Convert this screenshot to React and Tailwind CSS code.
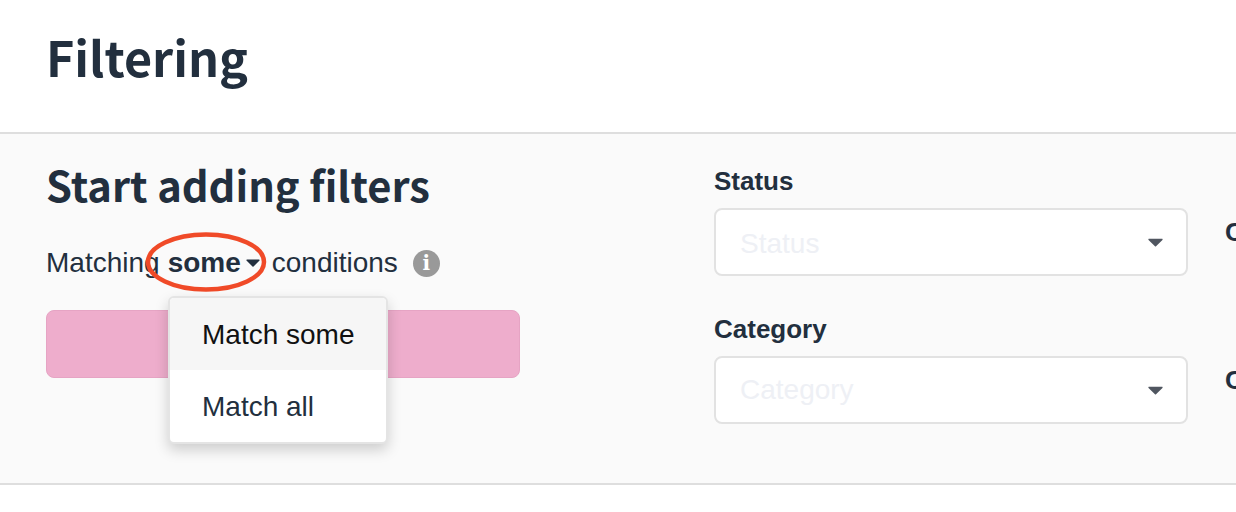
import React from 'react';

const heading = "font-['Noto_Sans_CJK_SC',sans-serif] font-bold text-[#222f3e]";

function Caret({ className }) {
  return (
    <svg viewBox="0 0 14 8" className={className} fill="currentColor">
      <path d="M1 0.5h12c.6 0 .9.7.5 1.1L7.5 7.4c-.3.3-.7.3-1 0L.5 1.6C.1 1.2.4.5 1 .5z" />
    </svg>
  );
}

function SelectField({ label, className, textClass }) {
  return (
    <div className={className}>
      <label className="block text-[26px] leading-[30px] font-bold text-[#222f3e]">{label}</label>
      <div className="mt-[12px] flex h-[68px] w-[474px] items-center justify-between rounded-[8px] border-2 border-[#e2e2e2] bg-white pl-[24px] pr-[23px]">
        <span className={`text-[28px] text-[#eef0f5] ${textClass}`}>{label}</span>
        <Caret className="h-[9px] w-[15px] text-[#505660]" />
      </div>
    </div>
  );
}

export default function App() {
  return (
    <div className="h-[512px] w-[1236px] overflow-hidden bg-white font-['Liberation_Sans',Arial,sans-serif]">
      <header className="h-[132px] pl-[46px] pt-[20px]">
        <h1 className={`${heading} text-[48.5px] leading-[72px]`}>Filtering</h1>
      </header>

      <section className="flex h-[353px] border-y-2 border-[#dedede] bg-[#fafafa]">
        <div className="relative ml-[46px] w-[474px] shrink-0 pt-[20px]">
          <h2 className={`${heading} whitespace-nowrap text-[41.7px] leading-[60px]`}>Start adding filters</h2>

          <div className="mt-[31px] flex h-[36px] items-center whitespace-nowrap text-[28px] text-[#222f3e]">
            <span>Matching</span>
            <span className="ml-[8px] font-bold">some</span>
            <Caret className="ml-[5px] h-[8px] w-[14px]" />
            <span className="ml-[12px]">conditions</span>
            <span className="ml-[15px] flex h-[27px] w-[27px] items-center justify-center rounded-full bg-[#999999] font-['DejaVu_Serif',serif] text-[20px] font-bold leading-none text-white">i</span>
          </div>

          <div className="mt-[29px] h-[68px] rounded-[8px] border border-[#e6a4c4] bg-[#eeadcc]" />

          <svg viewBox="0 0 120 60" className="absolute left-[100px] top-[98px] h-[60px] w-[120px] overflow-visible" fill="none">
            <ellipse cx="60" cy="30" rx="58" ry="27.5" stroke="#f04a28" strokeWidth="4.5" />
          </svg>

          <div className="absolute left-[122px] top-[162px] w-[220px] overflow-hidden rounded-[6px] border-2 border-[#e4e4e4] bg-white shadow-[0_6px_14px_rgba(0,0,0,0.18)]">
            <div className="flex h-[72px] items-center bg-[#f6f6f6] pl-[32px] pt-[1px] text-[28px] text-[#111111]">Match some</div>
            <div className="flex h-[72px] items-center pl-[32px] pt-[1px] text-[28px] text-[#222f3e]">Match all</div>
          </div>
        </div>

        <div className="ml-[194px] w-[474px] shrink-0 pt-[32px]">
          <SelectField label="Status" textClass="pt-[3px]" />
          <SelectField label="Category" className="mt-[38px]" />
        </div>

        <div className="ml-[37px] shrink-0 whitespace-nowrap pt-[83px] text-[26px] font-bold leading-[30px] text-[#222f3e]">
          <div>Condition</div>
          <div className="mt-[118px]">Condition</div>
        </div>
      </section>
    </div>
  );
}
